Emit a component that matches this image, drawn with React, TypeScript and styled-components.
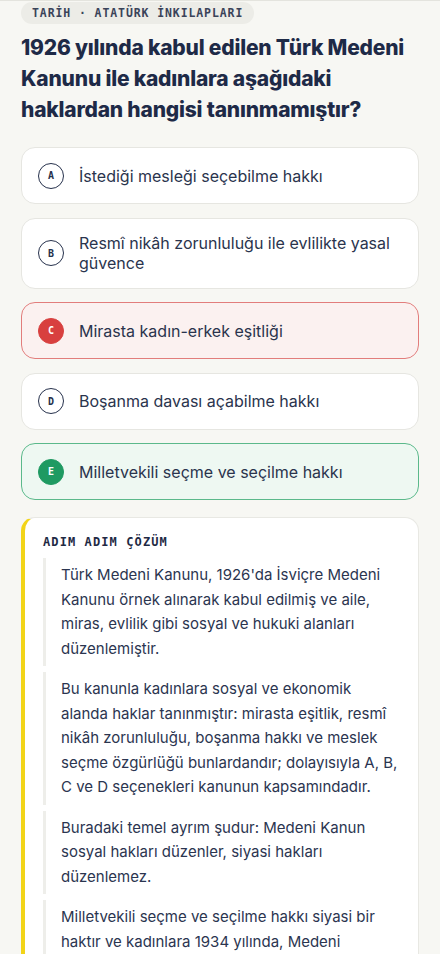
import React from 'react';
import styled, {createGlobalStyle, css} from 'styled-components';

const GlobalStyle = createGlobalStyle`
    html, body {
        margin: 0;
        padding: 0;
        background: #f7f7f3;
    }
    body {
        font-family: Inter, "Noto Sans", sans-serif;
        color: #1f2a44;
        border-top: 1px solid #e4e4de;
    }
`;

type Status = 'idle' | 'wrong' | 'correct';

const options: {key: string; text: string; status: Status}[] = [
    {key: 'A', text: 'İstediği mesleği seçebilme hakkı', status: 'idle'},
    {key: 'B', text: 'Resmî nikâh zorunluluğu ile evlilikte yasal güvence', status: 'idle'},
    {key: 'C', text: 'Mirasta kadın-erkek eşitliği', status: 'wrong'},
    {key: 'D', text: 'Boşanma davası açabilme hakkı', status: 'idle'},
    {key: 'E', text: 'Milletvekili seçme ve seçilme hakkı', status: 'correct'},
];

const steps = [
    "Türk Medeni Kanunu, 1926'da İsviçre Medeni Kanunu örnek alınarak kabul edilmiş ve aile, miras, evlilik gibi sosyal ve hukuki alanları düzenlemiştir.",
    'Bu kanunla kadınlara sosyal ve ekonomik alanda haklar tanınmıştır: mirasta eşitlik, resmî nikâh zorunluluğu, boşanma hakkı ve meslek seçme özgürlüğü bunlardandır; dolayısıyla A, B, C ve D seçenekleri kanunun kapsamındadır.',
    'Buradaki temel ayrım şudur: Medeni Kanun sosyal hakları düzenler, siyasi hakları düzenlemez.',
    'Milletvekili seçme ve seçilme hakkı siyasi bir haktır ve kadınlara 1934 yılında, Medeni Kanun’dan ayrı bir düzenlemeyle verilmiştir.',
];

export default function App() {
    return (
        <Page>
            <GlobalStyle />
            <Tag>TARİH · ATATÜRK İNKILAPLARI</Tag>
            <Question>1926 yılında kabul edilen Türk Medeni Kanunu ile kadınlara aşağıdaki haklardan hangisi tanınmamıştır?</Question>

            <OptionList>
                {options.map(o => (
                    <Option key={o.key} $status={o.status}>
                        <Letter $status={o.status}>{o.key}</Letter>
                        <OptionText>{o.text}</OptionText>
                    </Option>
                ))}
            </OptionList>

            <Solution>
                <SolutionTitle>ADIM ADIM ÇÖZÜM</SolutionTitle>
                {steps.map((s, i) => (
                    <Step key={i}>{s}</Step>
                ))}
            </Solution>
        </Page>
    );
}

const Page = styled.div`
    padding: 1px 21px 40px 21px;
    display: flex;
    flex-direction: column;
    align-items: flex-start;
`;

const Tag = styled.div`
    font-family: "DejaVu Sans Mono", "Liberation Mono", monospace;
    font-weight: 700;
    font-size: 11.5px;
    letter-spacing: 0.9px;
    color: #3a4359;
    background: #ecece7;
    border-radius: 999px;
    padding: 0 11px;
    height: 22px;
    line-height: 22px;
`;

const Question = styled.h1`
    margin: 8px 0 22px 0;
    font-size: 21px;
    line-height: 31px;
    font-weight: 800;
    color: #1e2a47;
    letter-spacing: -0.2px;
`;

const OptionList = styled.div`
    align-self: stretch;
    display: flex;
    flex-direction: column;
    gap: 13.5px;
`;

const Option = styled.div<{$status: Status}>`
    display: flex;
    align-items: center;
    gap: 15px;
    padding: 14.5px 16px;
    border-radius: 14px;
    border: 1.5px solid #e6e6e1;
    background: #ffffff;

    ${p => p.$status === 'wrong' && css`
        background: #fbf1f0;
        border-color: #e27d7c;
    `}
    ${p => p.$status === 'correct' && css`
        background: #eef8f2;
        border-color: #5bb98b;
    `}
`;

const Letter = styled.div<{$status: Status}>`
    flex: none;
    width: 26px;
    height: 26px;
    box-sizing: border-box;
    border-radius: 50%;
    border: 1.5px solid #26314c;
    display: flex;
    align-items: center;
    justify-content: center;
    font-family: "DejaVu Sans Mono", monospace;
    font-weight: 700;
    font-size: 10px;
    color: #26314c;

    ${p => p.$status === 'wrong' && css`
        background: #d8403f;
        border-color: #d8403f;
        color: #ffffff;
    `}
    ${p => p.$status === 'correct' && css`
        background: #1f9a62;
        border-color: #1f9a62;
        color: #ffffff;
    `}
`;

const OptionText = styled.div`
    font-size: 16px;
    line-height: 20px;
    color: #2a344d;
`;

const Solution = styled.div`
    align-self: stretch;
    margin-top: 17px;
    background: #ffffff;
    border: 1px solid #e8e8e3;
    border-left: 4px solid #f2d418;
    border-radius: 14px;
    padding: 17px 18px 18px 18px;
    display: flex;
    flex-direction: column;
    gap: 6px;
`;

const SolutionTitle = styled.div`
    font-family: "DejaVu Sans Mono", "Liberation Mono", monospace;
    font-weight: 700;
    font-size: 12px;
    letter-spacing: 1.1px;
    line-height: 14px;
    color: #1f2a44;
    margin-bottom: 3px;
`;

const Step = styled.p`
    margin: 0;
    border-left: 3px solid #eeeeea;
    padding: 5px 0 5px 15px;
    font-size: 15px;
    line-height: 24.5px;
    color: #2b3550;
`;
